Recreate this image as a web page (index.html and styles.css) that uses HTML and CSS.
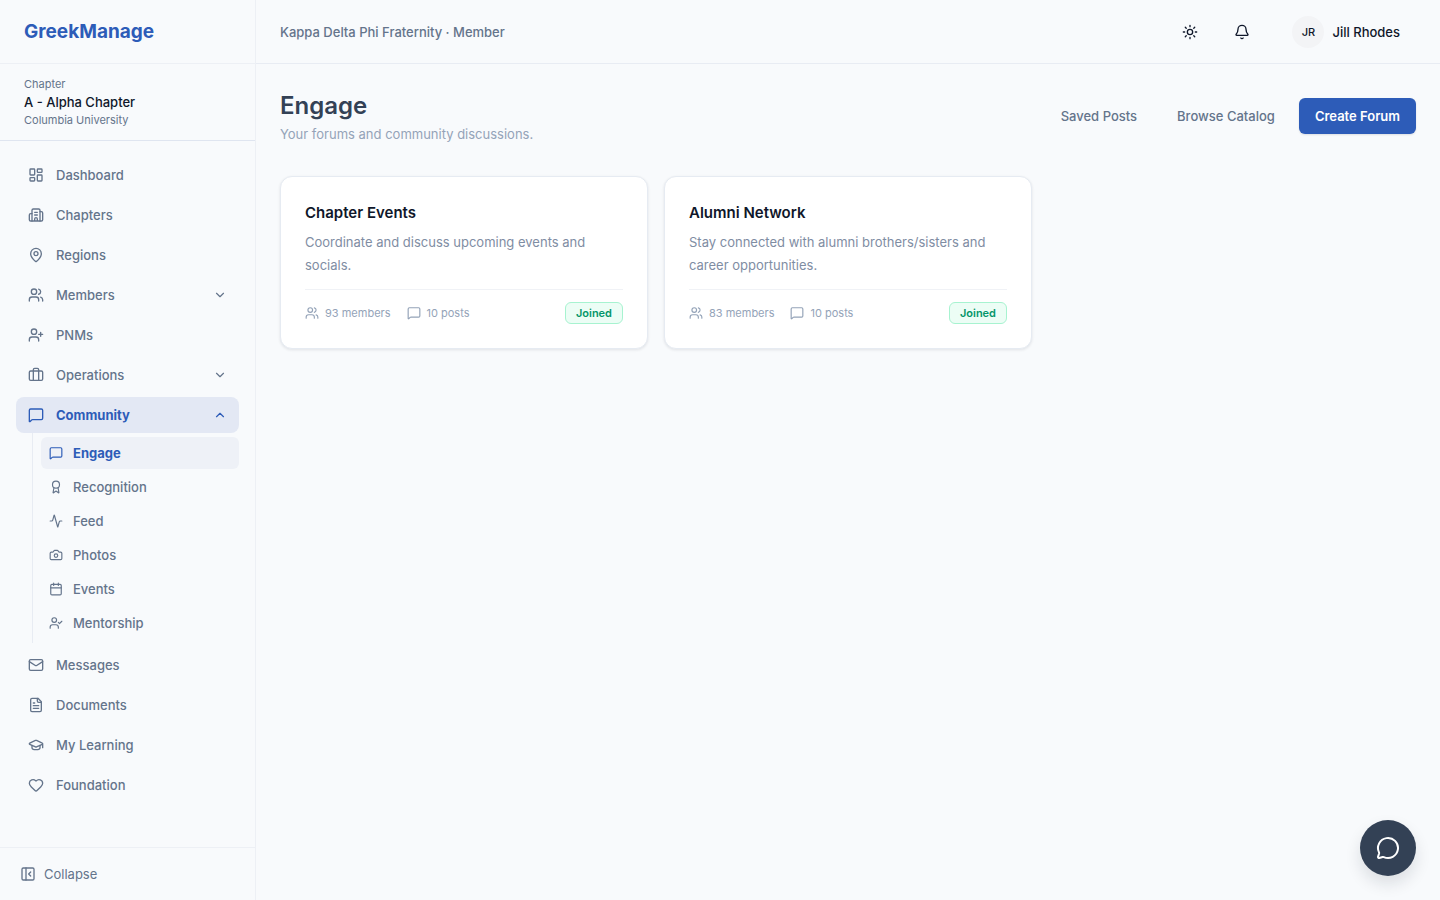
FILE: index.html
```html
<!DOCTYPE html>
<html lang="en">
<head>
<meta charset="utf-8">
<meta name="viewport" content="width=device-width, initial-scale=1">
<title>Engage - GreekManage</title>
<link rel="stylesheet" href="styles.css">
</head>
<body>
<svg class="sprite" aria-hidden="true">
  <symbol id="dashboard" viewBox="0 0 24 24"><rect width="7" height="9" x="3" y="3" rx="1"/><rect width="7" height="5" x="14" y="3" rx="1"/><rect width="7" height="9" x="14" y="12" rx="1"/><rect width="7" height="5" x="3" y="16" rx="1"/></symbol>
  <symbol id="building" viewBox="0 0 24 24"><path d="M10 12h4M10 8h4M14 21v-3a2 2 0 0 0-4 0v3M6 10H4a2 2 0 0 0-2 2v7a2 2 0 0 0 2 2h16a2 2 0 0 0 2-2V9a2 2 0 0 0-2-2h-2"/><path d="M6 21V5a2 2 0 0 1 2-2h8a2 2 0 0 1 2 2v16"/></symbol>
  <symbol id="pin" viewBox="0 0 24 24"><path d="M20 10c0 4.993-5.539 10.193-7.399 11.799a1 1 0 0 1-1.202 0C9.539 20.193 4 14.993 4 10a8 8 0 0 1 16 0"/><circle cx="12" cy="10" r="3"/></symbol>
  <symbol id="users" viewBox="0 0 24 24"><path d="M16 21v-2a4 4 0 0 0-4-4H6a4 4 0 0 0-4 4v2"/><circle cx="9" cy="7" r="4"/><path d="M22 21v-2a4 4 0 0 0-3-3.87M16 3.13a4 4 0 0 1 0 7.75"/></symbol>
  <symbol id="user-plus" viewBox="0 0 24 24"><path d="M16 21v-2a4 4 0 0 0-4-4H6a4 4 0 0 0-4 4v2"/><circle cx="9" cy="7" r="4"/><path d="M19 8v6M22 11h-6"/></symbol>
  <symbol id="user-check" viewBox="0 0 24 24"><path d="M16 21v-2a4 4 0 0 0-4-4H6a4 4 0 0 0-4 4v2"/><circle cx="9" cy="7" r="4"/><path d="m16 11 2 2 4-4"/></symbol>
  <symbol id="briefcase" viewBox="0 0 24 24"><path d="M16 20V4a2 2 0 0 0-2-2h-4a2 2 0 0 0-2 2v16"/><rect width="20" height="14" x="2" y="6" rx="2"/></symbol>
  <symbol id="message" viewBox="0 0 24 24"><path d="M22 17a2 2 0 0 1-2 2H6.828a2 2 0 0 0-1.414.586l-2.202 2.202A.71.71 0 0 1 2 21.286V5a2 2 0 0 1 2-2h16a2 2 0 0 1 2 2z"/></symbol>
  <symbol id="award" viewBox="0 0 24 24"><path d="m15.477 12.89 1.515 8.526a.5.5 0 0 1-.81.47l-3.58-2.687a1 1 0 0 0-1.197 0l-3.586 2.686a.5.5 0 0 1-.81-.469l1.514-8.526"/><circle cx="12" cy="8" r="6"/></symbol>
  <symbol id="activity" viewBox="0 0 24 24"><path d="M22 12h-2.480a2 2 0 0 0-1.930 1.460l-2.350 8.360a.25.25 0 0 1-.48 0L9.240 2.180a.25.25 0 0 0-.48 0l-2.350 8.360A2 2 0 0 1 4.490 12H2"/></symbol>
  <symbol id="camera" viewBox="0 0 24 24"><path d="M13.997 4a2 2 0 0 1 1.760 1.050l.486.900A2 2 0 0 0 18.003 7H20a2 2 0 0 1 2 2v9a2 2 0 0 1-2 2H4a2 2 0 0 1-2-2V9a2 2 0 0 1 2-2h1.997a2 2 0 0 0 1.759-1.048l.489-.904A2 2 0 0 1 10.004 4z"/><circle cx="12" cy="13" r="3"/></symbol>
  <symbol id="calendar" viewBox="0 0 24 24"><path d="M8 2v4M16 2v4"/><rect width="18" height="18" x="3" y="4" rx="2"/><path d="M3 10h18"/></symbol>
  <symbol id="mail" viewBox="0 0 24 24"><path d="m22 7-8.991 5.727a2 2 0 0 1-2.009 0L2 7"/><rect width="20" height="16" x="2" y="4" rx="2"/></symbol>
  <symbol id="file" viewBox="0 0 24 24"><path d="M15 2H6a2 2 0 0 0-2 2v16a2 2 0 0 0 2 2h12a2 2 0 0 0 2-2V7z"/><path d="M14 2v4a2 2 0 0 0 2 2h4M10 9H8M16 13H8M16 17H8"/></symbol>
  <symbol id="cap" viewBox="0 0 24 24"><path d="M21.420 10.922a1 1 0 0 0-.019-1.838L12.830 5.180a2 2 0 0 0-1.660 0L2.600 9.080a1 1 0 0 0 0 1.832l8.570 3.908a2 2 0 0 0 1.660 0zM22 10v6"/><path d="M6 12.500V16a6 3 0 0 0 12 0v-3.500"/></symbol>
  <symbol id="heart" viewBox="0 0 24 24"><path d="M2 9.500a5.500 5.500 0 0 1 9.591-3.676.56.56 0 0 0 .818 0A5.490 5.490 0 0 1 22 9.500c0 2.290-1.500 4-3 5.500l-5.492 5.313a2 2 0 0 1-3 .019L5 15c-1.500-1.500-3-3.200-3-5.500"/></symbol>
  <symbol id="panel" viewBox="0 0 24 24"><rect width="18" height="18" x="3" y="3" rx="2"/><path d="M9 3v18M16 15l-3-3 3-3"/></symbol>
  <symbol id="down" viewBox="0 0 24 24"><path d="m6 9 6 6 6-6"/></symbol>
  <symbol id="up" viewBox="0 0 24 24"><path d="m18 15-6-6-6 6"/></symbol>
  <symbol id="sun" viewBox="0 0 24 24"><circle cx="12" cy="12" r="4"/><path d="M12 2v2M12 20v2M4.930 4.930l1.410 1.410M17.660 17.660l1.410 1.410M2 12h2M20 12h2M6.340 17.660l-1.410 1.410M19.070 4.930l-1.410 1.410"/></symbol>
  <symbol id="bell" viewBox="0 0 24 24"><path d="M10.268 21a2 2 0 0 0 3.464 0"/><path d="M3.262 15.326A1 1 0 0 0 4 17h16a1 1 0 0 0 .740-1.673C19.410 13.956 18 12.499 18 8A6 6 0 0 0 6 8c0 4.499-1.411 5.956-2.738 7.326"/></symbol>
  <symbol id="chat" viewBox="0 0 24 24"><path d="M2.992 16.342a2 2 0 0 1 .094 1.167l-1.065 3.290a1 1 0 0 0 1.236 1.168l3.413-.998a2 2 0 0 1 1.099.092 10 10 0 1 0-4.777-4.719"/></symbol>
</svg>
<div class="app">
  <aside class="sidebar">
    <div class="brand"><a class="brand-link" href="#">GreekManage</a></div>
    <div class="chapter">
      <p class="chapter-meta">Chapter</p>
      <p class="chapter-name">A - Alpha Chapter</p>
      <p class="chapter-meta">Columbia University</p>
    </div>
    <nav class="nav" aria-label="Main">
      <a class="nav-item" href="#"><svg class="icon"><use href="#dashboard"/></svg>Dashboard</a>
      <a class="nav-item" href="#"><svg class="icon"><use href="#building"/></svg>Chapters</a>
      <a class="nav-item" href="#"><svg class="icon"><use href="#pin"/></svg>Regions</a>
      <button class="nav-item" type="button" aria-expanded="false"><svg class="icon"><use href="#users"/></svg>Members<svg class="icon icon-sm chevron"><use href="#down"/></svg></button>
      <a class="nav-item" href="#"><svg class="icon"><use href="#user-plus"/></svg>PNMs</a>
      <button class="nav-item" type="button" aria-expanded="false"><svg class="icon"><use href="#briefcase"/></svg>Operations<svg class="icon icon-sm chevron"><use href="#down"/></svg></button>
      <div class="nav-group">
        <button class="nav-item nav-item-open" type="button" aria-expanded="true"><svg class="icon"><use href="#message"/></svg>Community<svg class="icon icon-sm chevron"><use href="#up"/></svg></button>
        <div class="subnav">
          <a class="sub-item sub-item-active" href="#" aria-current="page"><svg class="icon icon-sm"><use href="#message"/></svg>Engage</a>
          <a class="sub-item" href="#"><svg class="icon icon-sm"><use href="#award"/></svg>Recognition</a>
          <a class="sub-item" href="#"><svg class="icon icon-sm"><use href="#activity"/></svg>Feed</a>
          <a class="sub-item" href="#"><svg class="icon icon-sm"><use href="#camera"/></svg>Photos</a>
          <a class="sub-item" href="#"><svg class="icon icon-sm"><use href="#calendar"/></svg>Events</a>
          <a class="sub-item" href="#"><svg class="icon icon-sm"><use href="#user-check"/></svg>Mentorship</a>
        </div>
      </div>
      <a class="nav-item" href="#"><svg class="icon"><use href="#mail"/></svg>Messages</a>
      <a class="nav-item" href="#"><svg class="icon"><use href="#file"/></svg>Documents</a>
      <a class="nav-item" href="#"><svg class="icon"><use href="#cap"/></svg>My Learning</a>
      <a class="nav-item" href="#"><svg class="icon"><use href="#heart"/></svg>Foundation</a>
    </nav>
    <div class="sidebar-footer">
      <button class="collapse" type="button"><svg class="icon"><use href="#panel"/></svg>Collapse</button>
    </div>
  </aside>
  <div class="content">
    <header class="topbar">
      <p class="org">Kappa Delta Phi Fraternity · Member</p>
      <div class="topbar-actions">
        <button class="icon-button" type="button" aria-label="Toggle theme"><svg class="icon"><use href="#sun"/></svg></button>
        <button class="icon-button" type="button" aria-label="Notifications"><svg class="icon"><use href="#bell"/></svg></button>
        <button class="user" type="button"><span class="avatar">JR</span>Jill Rhodes</button>
      </div>
    </header>
    <main class="main">
      <div class="page-head">
        <div>
          <h1 class="page-title">Engage</h1>
          <p class="page-subtitle">Your forums and community discussions.</p>
        </div>
        <div class="page-actions">
          <button class="button" type="button">Saved Posts</button>
          <button class="button" type="button">Browse Catalog</button>
          <button class="button button-primary" type="button">Create Forum</button>
        </div>
      </div>
      <div class="forums">
        <article class="card">
          <h2 class="card-title">Chapter Events</h2>
          <p class="card-text">Coordinate and discuss upcoming events and socials.</p>
          <div class="card-foot">
            <span class="stat"><svg class="icon icon-sm"><use href="#users"/></svg>93 members</span>
            <span class="stat"><svg class="icon icon-sm"><use href="#message"/></svg>10 posts</span>
            <span class="badge">Joined</span>
          </div>
        </article>
        <article class="card">
          <h2 class="card-title">Alumni Network</h2>
          <p class="card-text">Stay connected with alumni brothers/sisters and career opportunities.</p>
          <div class="card-foot">
            <span class="stat"><svg class="icon icon-sm"><use href="#users"/></svg>83 members</span>
            <span class="stat"><svg class="icon icon-sm"><use href="#message"/></svg>10 posts</span>
            <span class="badge">Joined</span>
          </div>
        </article>
      </div>
    </main>
  </div>
</div>
<button class="chat-button" type="button" aria-label="Open chat"><svg class="icon icon-lg"><use href="#chat"/></svg></button>
</body>
</html>
```
FILE: styles.css
```css
*, *::before, *::after { box-sizing: border-box; }

body {
  margin: 0;
  background: #f8fafc;
  color: #0f172a;
  font-family: Inter, "Liberation Sans", sans-serif;
  font-size: 13px;
  line-height: 20px;
  -webkit-font-smoothing: antialiased;
}

h1, h2, p { margin: 0; }
a { color: inherit; text-decoration: none; }
button {
  border: 0;
  padding: 0;
  background: none;
  color: inherit;
  font: inherit;
  cursor: pointer;
}

.sprite { position: absolute; width: 0; height: 0; }
.icon {
  flex: none;
  width: 16px;
  height: 16px;
  fill: none;
  stroke: currentColor;
  stroke-width: 2;
  stroke-linecap: round;
  stroke-linejoin: round;
}
.icon-sm { width: 14px; height: 14px; }
.icon-lg { width: 24px; height: 24px; }

.app { display: flex; min-height: 100vh; }

.sidebar {
  display: flex;
  flex: none;
  flex-direction: column;
  width: 256px;
  border-right: 1px solid #edf0f5;
}
.brand {
  display: flex;
  align-items: center;
  height: 64px;
  padding: 0 24px;
  border-bottom: 1px solid #edf0f5;
}
.brand-link { color: #2d5cb8; font-size: 19px; font-weight: 700; line-height: 28px; }
.chapter { padding: 12px 24px; border-bottom: 1px solid #dfe5f0; }
.chapter-meta { color: #64748b; font-size: 11px; line-height: 16px; }
.chapter-name { font-weight: 500; }

.nav {
  display: flex;
  flex: 1;
  flex-direction: column;
  gap: 4px;
  padding: 16px;
}
.nav-item {
  display: flex;
  align-items: center;
  gap: 12px;
  width: 100%;
  height: 36px;
  padding: 0 12px;
  border-radius: 8px;
  color: #64748b;
  font-weight: 500;
  text-align: left;
}
.nav-item-open { background: #e3e8f4; color: #2d5cb8; font-weight: 700; }
.chevron { margin-left: auto; }
.subnav {
  display: flex;
  flex-direction: column;
  gap: 2px;
  margin-left: 16px;
  padding: 4px 0 4px 8px;
  border-left: 1px solid #e8ecf3;
}
.sub-item {
  display: flex;
  align-items: center;
  gap: 10px;
  height: 32px;
  padding: 0 8px;
  border-radius: 6px;
  color: #64748b;
  font-weight: 500;
}
.sub-item-active { background: #eef1f7; color: #2d5cb8; font-weight: 700; }

.sidebar-footer { padding: 8px; border-top: 1px solid #edf0f5; }
.collapse {
  display: flex;
  align-items: center;
  gap: 8px;
  width: 100%;
  height: 36px;
  padding: 0 12px;
  color: #64748b;
}

.content { flex: 1; min-width: 0; }
.topbar {
  display: flex;
  align-items: center;
  justify-content: space-between;
  height: 64px;
  padding: 0 24px;
  border-bottom: 1px solid #e8ecf3;
}
.org { color: #64748b; font-weight: 500; }
.topbar-actions { display: flex; align-items: center; gap: 16px; }
.icon-button {
  display: flex;
  align-items: center;
  justify-content: center;
  width: 36px;
  height: 36px;
}
.user {
  display: flex;
  align-items: center;
  gap: 8px;
  height: 36px;
  padding: 0 16px;
  font-weight: 500;
}
.avatar {
  display: flex;
  align-items: center;
  justify-content: center;
  width: 32px;
  height: 32px;
  border-radius: 50%;
  background: #f3f4f6;
  font-size: 11px;
}

.main { padding: 24px; }
.page-head {
  display: flex;
  align-items: center;
  justify-content: space-between;
  margin-bottom: 32px;
}
.page-title { color: #334155; font-size: 24px; font-weight: 600; line-height: 36px; }
.page-subtitle { color: #94a3b8; }
.page-actions { display: flex; gap: 8px; }
.button {
  height: 36px;
  padding: 0 16px;
  border-radius: 6px;
  color: #64748b;
  font-weight: 500;
}
.button-primary {
  background: #2d5cb8;
  color: #fff;
  font-weight: 600;
  box-shadow: 0 1px 2px rgb(15 23 42 / 12%);
}

.forums { display: grid; grid-template-columns: repeat(3, minmax(0, 1fr)); gap: 16px; }
.card {
  padding: 24px;
  border: 1px solid #e6ebf2;
  border-radius: 12px;
  background: #fff;
  box-shadow: 0 1px 3px rgb(15 23 42 / 10%);
}
.card-title { font-size: 15px; font-weight: 600; line-height: 24px; }
.card-text { margin-top: 6px; color: #7f8da3; line-height: 23px; }
.card-foot {
  display: flex;
  align-items: center;
  gap: 16px;
  margin-top: 12px;
  padding-top: 12px;
  border-top: 1px solid #f0f2f6;
}
.stat {
  display: flex;
  align-items: center;
  gap: 6px;
  color: #94a3b8;
  font-size: 11px;
  line-height: 16px;
}
.badge {
  margin-left: auto;
  padding: 2px 10px;
  border: 1px solid #a7f3d0;
  border-radius: 6px;
  background: #ecfdf5;
  color: #059669;
  font-size: 11px;
  font-weight: 600;
  line-height: 16px;
}

.chat-button {
  position: fixed;
  right: 24px;
  bottom: 24px;
  display: flex;
  align-items: center;
  justify-content: center;
  width: 56px;
  height: 56px;
  border-radius: 50%;
  background: #334155;
  color: #fff;
  box-shadow: 0 8px 16px rgb(15 23 42 / 12%);
}
```
